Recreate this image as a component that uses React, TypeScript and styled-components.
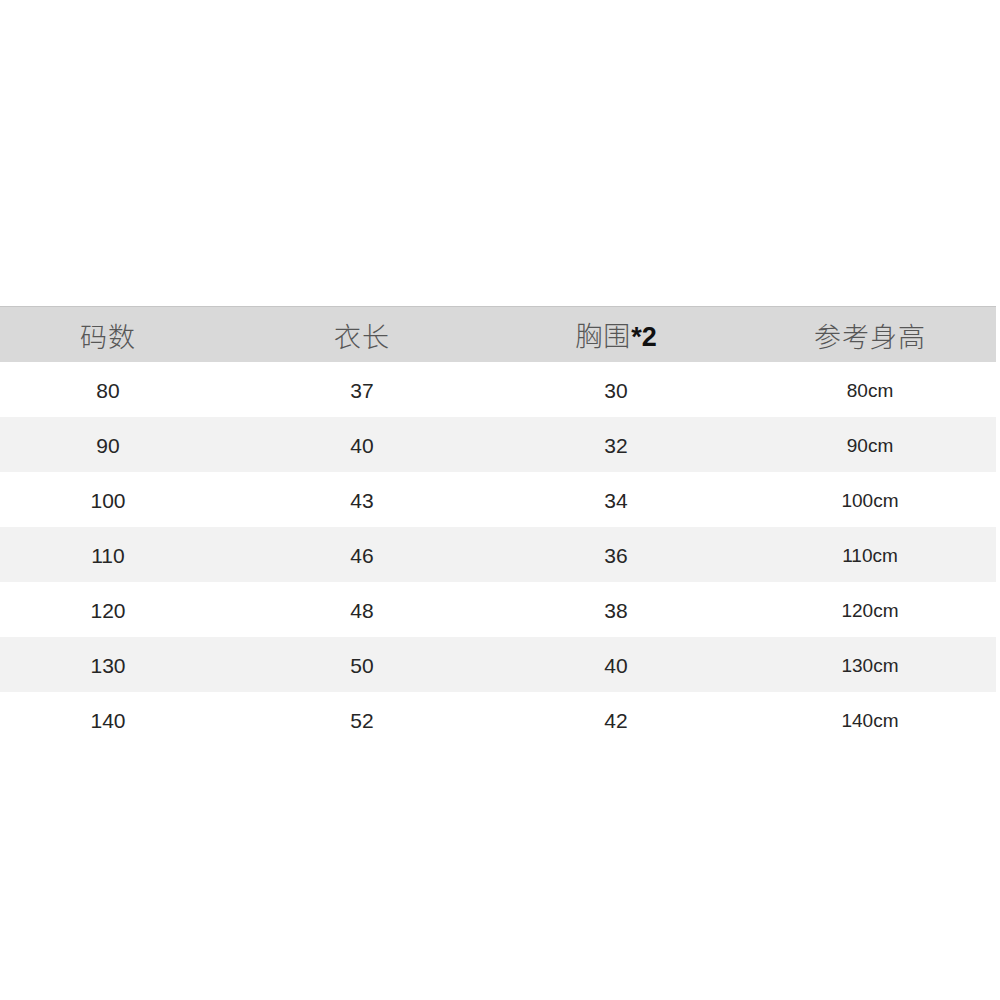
import React from "react";
import styled, { createGlobalStyle } from "styled-components";

const GlobalStyle = createGlobalStyle`
  html, body {
    margin: 0;
    padding: 0;
    background: #ffffff;
    overflow: hidden;
  }
`;

const Page = styled.div`
  width: 1000px;
  height: 1000px;
  display: flex;
  flex-direction: column;
  justify-content: flex-start;
  padding-top: 306px;
  box-sizing: border-box;
  background: #ffffff;
`;

const Table = styled.div`
  width: 996px;
  display: flex;
  flex-direction: column;
`;

interface RowProps {
  $shade?: "head" | "odd" | "even";
}

const Row = styled.div<RowProps>`
  height: 55px;
  background: ${(p) =>
    p.$shade === "head" ? "#d9d9d9" : p.$shade === "even" ? "#f2f2f2" : "#ffffff"};
  border-top: ${(p) => (p.$shade === "head" ? "1px solid #c6c6c6" : "none")};
  overflow: hidden;
`;

const Cells = styled.div`
  margin-left: -19px;
  width: 1016px;
  height: 100%;
  display: grid;
  grid-template-columns: repeat(4, 1fr);
  align-items: center;
  justify-items: center;
`;

const HeadCell = styled.div`
  font-family: "Noto Sans CJK SC", sans-serif;
  font-weight: 300;
  font-size: 27px;
  color: #565656;
  letter-spacing: 1px;
  line-height: 1;
  padding-top: 2px;
`;

const Bold = styled.span`
  font-family: "Liberation Sans", Arial, sans-serif;
  font-weight: 700;
  color: #111111;
  letter-spacing: 0;
`;

interface CellProps {
  $small?: boolean;
}

const Cell = styled.div<CellProps>`
  font-family: "Liberation Sans", Arial, sans-serif;
  font-size: ${(p) => (p.$small ? "19px" : "21px")};
  color: #262626;
  line-height: 1;
  padding-top: 2px;
`;

const rows = [
  ["80", "37", "30", "80cm"],
  ["90", "40", "32", "90cm"],
  ["100", "43", "34", "100cm"],
  ["110", "46", "36", "110cm"],
  ["120", "48", "38", "120cm"],
  ["130", "50", "40", "130cm"],
  ["140", "52", "42", "140cm"],
];

export default function App() {
  return (
    <>
      <GlobalStyle />
      <Page>
        <Table>
          <Row $shade="head">
            <Cells>
              <HeadCell>码数</HeadCell>
              <HeadCell>衣长</HeadCell>
              <HeadCell>
                胸围<Bold>*2</Bold>
              </HeadCell>
              <HeadCell>参考身高</HeadCell>
            </Cells>
          </Row>
          {rows.map((r, i) => (
            <Row key={r[0]} $shade={i % 2 === 1 ? "even" : "odd"}>
              <Cells>
                <Cell>{r[0]}</Cell>
                <Cell>{r[1]}</Cell>
                <Cell>{r[2]}</Cell>
                <Cell $small>{r[3]}</Cell>
              </Cells>
            </Row>
          ))}
        </Table>
      </Page>
    </>
  );
}
